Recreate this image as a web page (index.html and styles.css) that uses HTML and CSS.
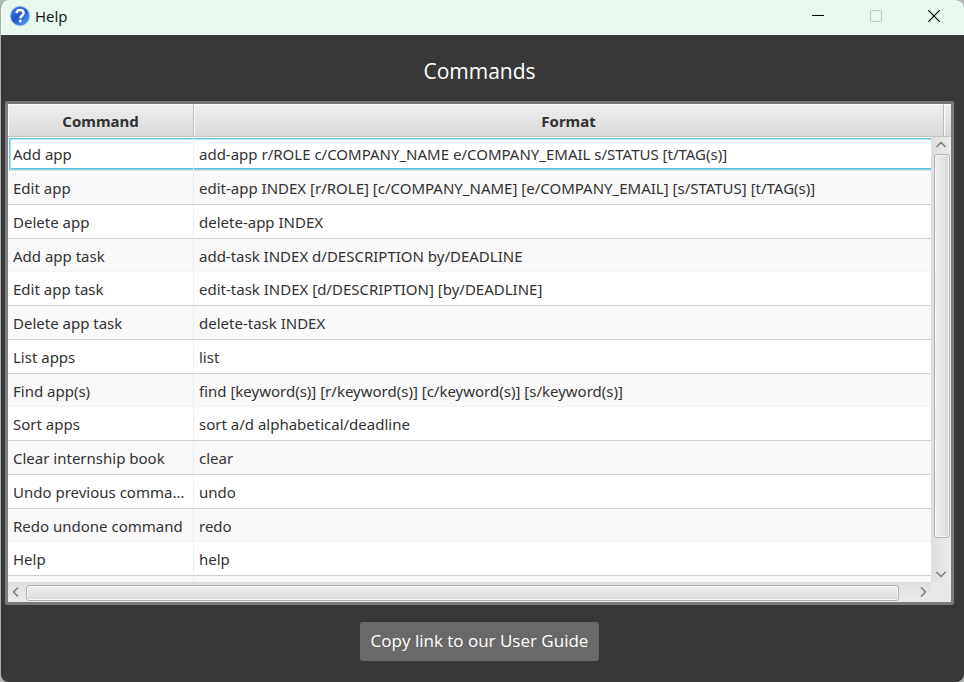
FILE: index.html
```html
<!DOCTYPE html>
<html lang="en">
<head>
<meta charset="utf-8">
<title>Help</title>
<link rel="stylesheet" href="styles.css">
</head>
<body>
<div class="window">
  <header class="titlebar">
    <svg class="app-icon" viewBox="0 0 20 20" aria-hidden="true">
      <defs>
        <linearGradient id="ball" x1="0" y1="0" x2="1" y2="1">
          <stop offset="0" stop-color="#4a80dc"/>
          <stop offset=".45" stop-color="#1f55c8"/>
          <stop offset="1" stop-color="#58a8f4"/>
        </linearGradient>
      </defs>
      <circle cx="10" cy="10" r="9.4" fill="url(#ball)" stroke="#6d94d8" stroke-width=".8"/>
      <path d="M6.600 7.200C6.800 5 8.200 4.100 10.100 4.100c2 0 3.400 1.100 3.400 2.900 0 2.400-3.100 2.600-3.100 5.200" fill="none" stroke="#fff" stroke-width="2.500"/>
      <circle cx="10.300" cy="15" r="1.500" fill="#fff"/>
    </svg>
    <h1 class="title">Help</h1>
    <button class="win-btn" type="button" aria-label="Minimize"><svg viewBox="0 0 12 12"><path d="M0 5.500h12" stroke="#000"/></svg></button>
    <button class="win-btn" type="button" aria-label="Maximize" disabled><svg viewBox="0 0 12 12"><rect x=".5" y=".5" width="11" height="11" rx="1" fill="none" stroke="#b9c6be"/></svg></button>
    <button class="win-btn" type="button" aria-label="Close"><svg viewBox="0 0 12 12"><path d="M.3 .3l11.400 11.400M11.700 .3L.3 11.700" stroke="#000" stroke-width="1.200"/></svg></button>
  </header>
  <main class="content">
    <h2 class="heading">Commands</h2>
    <div class="table-view">
      <div class="viewport">
        <table class="commands">
          <colgroup><col class="col-command"><col><col class="col-filler"></colgroup>
          <thead><tr><th scope="col">Command</th><th scope="col">Format</th><td></td></tr></thead>
          <tbody>
            <tr class="focused"><td>Add app</td><td colspan="2">add-app r/ROLE c/COMPANY_NAME e/COMPANY_EMAIL s/STATUS [t/TAG(s)]</td></tr>
            <tr><td>Edit app</td><td colspan="2">edit-app INDEX [r/ROLE] [c/COMPANY_NAME] [e/COMPANY_EMAIL] [s/STATUS] [t/TAG(s)]</td></tr>
            <tr><td>Delete app</td><td colspan="2">delete-app INDEX</td></tr>
            <tr><td>Add app task</td><td colspan="2">add-task INDEX d/DESCRIPTION by/DEADLINE</td></tr>
            <tr><td>Edit app task</td><td colspan="2">edit-task INDEX [d/DESCRIPTION] [by/DEADLINE]</td></tr>
            <tr><td>Delete app task</td><td colspan="2">delete-task INDEX</td></tr>
            <tr><td>List apps</td><td colspan="2">list</td></tr>
            <tr><td>Find app(s)</td><td colspan="2">find [keyword(s)] [r/keyword(s)] [c/keyword(s)] [s/keyword(s)]</td></tr>
            <tr><td>Sort apps</td><td colspan="2">sort a/d alphabetical/deadline</td></tr>
            <tr><td>Clear internship book</td><td colspan="2">clear</td></tr>
            <tr><td>Undo previous comma...</td><td colspan="2">undo</td></tr>
            <tr><td>Redo undone command</td><td colspan="2">redo</td></tr>
            <tr><td>Help</td><td colspan="2">help</td></tr>
            <tr><td></td><td colspan="2"></td></tr>
          </tbody>
        </table>
      </div>
      <div class="vbar">
        <button class="arrow" type="button" aria-label="Scroll up"><svg viewBox="0 0 12 12"><path d="M1.500 8L6 3.500 10.500 8"/></svg></button>
        <div class="track"><div class="thumb"></div></div>
        <button class="arrow" type="button" aria-label="Scroll down"><svg viewBox="0 0 12 12"><path d="M1.500 4L6 8.500 10.500 4"/></svg></button>
      </div>
      <div class="hbar">
        <button class="arrow" type="button" aria-label="Scroll left"><svg viewBox="0 0 12 12"><path d="M8 1.500L3.500 6 8 10.500"/></svg></button>
        <div class="track"><div class="thumb"></div></div>
        <button class="arrow" type="button" aria-label="Scroll right"><svg viewBox="0 0 12 12"><path d="M4 1.500L8.500 6 4 10.500"/></svg></button>
      </div>
      <div class="corner"></div>
    </div>
    <button class="copy" type="button">Copy link to our User Guide</button>
  </main>
</div>
</body>
</html>
```
FILE: styles.css
```css
* { box-sizing: border-box; }
body {
  margin: 0;
  background: #b4b8b6;
  font-family: "Open Sans", "Noto Sans", sans-serif;
}
button { font: inherit; padding: 0; border: 0; background: none; }
.window {
  display: flex;
  flex-direction: column;
  height: 100vh;
  border-left: 1px solid #a9adab;
  border-radius: 8px;
  overflow: hidden;
  background: #383838;
}
.titlebar {
  display: flex;
  align-items: center;
  flex: none;
  height: 35px;
  padding: 0 1px 3px 9px;
  background: #e8f8ee;
}
.app-icon { width: 20px; height: 20px; }
.title {
  flex: 1;
  margin: 0 0 0 5px;
  font-size: 15px;
  font-weight: 400;
  color: #111;
}
.win-btn { display: grid; place-items: center; width: 58px; height: 32px; }
.win-btn svg { width: 12px; height: 12px; }
.content {
  display: flex;
  flex-direction: column;
  flex: 1;
  min-height: 0;
  align-items: center;
  padding: 21px 10px 21px 4px;
}
.heading {
  margin: 0 0 15px;
  font-size: 21px;
  line-height: 30px;
  font-weight: 400;
  color: #fff;
}
.table-view {
  display: grid;
  grid-template: 33px minmax(0, 1fr) 20px / minmax(0, 1fr) 20px;
  align-self: stretch;
  flex: 1;
  min-height: 0;
  border: 3px solid #7c7c7c;
  border-top-color: #757575;
  border-radius: 3px;
  background: #fff;
}
.viewport { grid-area: 1 / 1 / 3 / 3; overflow: hidden; }
.commands {
  width: 100%;
  table-layout: fixed;
  border-collapse: separate;
  border-spacing: 0;
  font-family: "Noto Sans", "Open Sans", sans-serif;
  font-size: 15px;
  line-height: 20px;
  color: #323232;
}
.col-command { width: 186px; }
.col-filler { width: 7px; }
thead th, thead td {
  height: 33px;
  padding: 1px 0 0;
  border-right: 1px solid #bcbcbc;
  border-bottom: 1px solid #c4c4c4;
  background: linear-gradient(#efefef, #d9d9d9);
  box-shadow: inset 1px 1px #fafafa;
}
thead td { border-right: 0; }
tbody td {
  height: 34px;
  padding: 0 5px;
  border-right: 1px solid #ededed;
  border-bottom: 1px solid #d0d0d0;
  white-space: nowrap;
}
tbody td:last-child { border-right: 0; }
tbody tr:nth-child(4n) td { height: 33px; padding-top: 1px; border-bottom-color: #f4f4f4; }
tbody tr:nth-child(even) { background: #f9f9f9; }
tbody .focused td {
  border-bottom-color: #dedede;
  box-shadow: inset 0 1px #fff, inset 0 2px #5fc0de, inset 0 3px #bfe5f1, inset 0 -1px #8fd2e7, inset 0 -2px #5fc0de;
}
tbody .focused td:first-child {
  box-shadow: inset 1px 1px #fff, inset 2px 2px #5fc0de, inset 3px 3px #bfe5f1, inset 0 -1px #8fd2e7, inset 0 -2px #5fc0de;
}
.vbar {
  grid-area: 2 / 2;
  display: flex;
  flex-direction: column;
  background: linear-gradient(90deg, #dedede, #ebebeb);
}
.hbar {
  grid-area: 3 / 1;
  display: flex;
  background: linear-gradient(#dedede, #ebebeb);
}
.corner { grid-area: 3 / 2; background: #e8e8e8; }
.arrow { display: grid; place-items: center; flex: none; }
.vbar .arrow { width: 20px; height: 16px; }
.hbar .arrow { width: 16px; height: 20px; }
.arrow svg { width: 12px; height: 12px; fill: none; stroke: #787878; stroke-width: 1.400; }
.track { display: flow-root; flex: 1; min-width: 0; min-height: 0; }
.thumb {
  border: 1px solid #b0b0b0;
  border-radius: 3px;
  box-shadow: inset 0 0 0 1px #f8f8f8;
}
.vbar .thumb { width: 16px; height: 93%; margin: 1px 0 0 3px; background: linear-gradient(90deg, #eee, #d9d9d9); }
.hbar .thumb { width: 98%; height: 16px; margin: 3px 0 0 2px; background: linear-gradient(#eee, #d9d9d9); }
.copy {
  flex: none;
  height: 39px;
  margin-top: 17px;
  padding: 0 11px 2px;
  border-radius: 3px;
  background: #696969;
  color: #fff;
  font-size: 17px;
}
```
